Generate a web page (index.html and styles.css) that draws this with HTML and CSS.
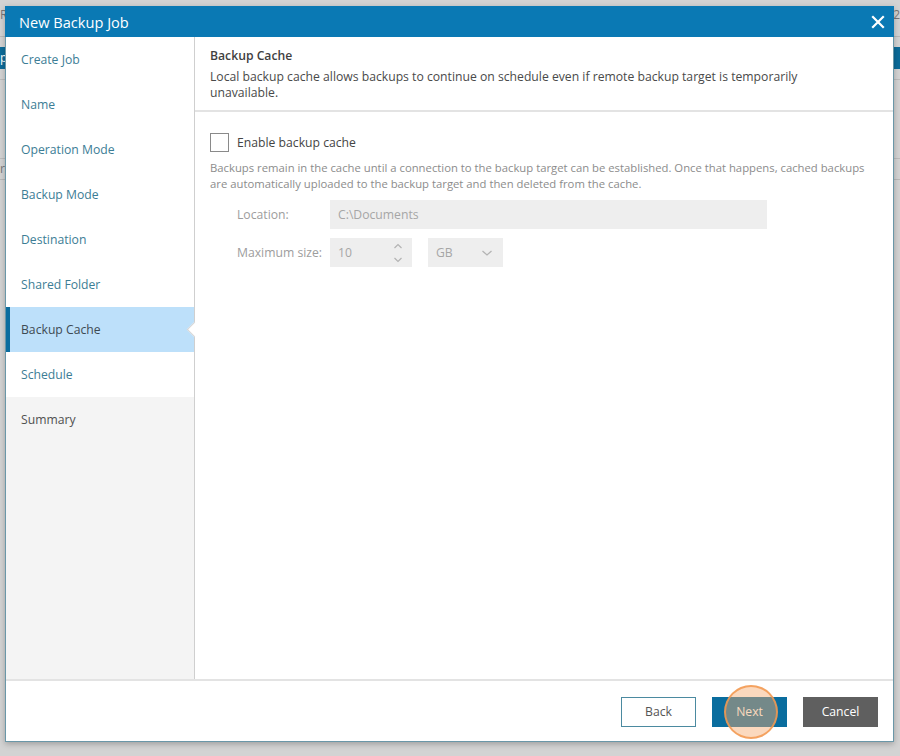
FILE: index.html
```html
<!DOCTYPE html>
<html>
<head>
<meta charset="utf-8">
<link rel="stylesheet" href="styles.css">
</head>
<body>
<div class="app">
  <div class="app-row app-top"><span>R</span><span>2</span></div>
  <div class="app-bar"><span>p</span></div>
  <div class="app-row app-sub"><span></span></div>
  <div class="app-row app-mid"><span>r</span></div>
</div>

<div class="dialog">
  <div class="dlg-title">
    <span>New Backup Job</span>
    <svg class="close" width="14" height="14" viewBox="0 0 14 14"><path d="M2 2 L12 12 M12 2 L2 12" stroke="#fff" stroke-width="2.2" stroke-linecap="square"/></svg>
  </div>
  <div class="dlg-body">
    <nav class="steps">
      <div class="step">Create Job</div>
      <div class="step">Name</div>
      <div class="step">Operation Mode</div>
      <div class="step">Backup Mode</div>
      <div class="step">Destination</div>
      <div class="step">Shared Folder</div>
      <div class="step active">Backup Cache</div>
      <div class="step">Schedule</div>
      <div class="step future">Summary</div>
    </nav>
    <main class="content">
      <div class="content-head">
        <div class="head-title">Backup Cache</div>
        <div class="head-desc">Local backup cache allows backups to continue on schedule even if remote backup target is temporarily unavailable.</div>
      </div>
      <div class="form">
        <label class="check-row"><span class="checkbox"></span><span>Enable backup cache</span></label>
        <p class="hint">Backups remain in the cache until a connection to the backup target can be established. Once that happens, cached backups are automatically uploaded to the backup target and then deleted from the cache.</p>
        <div class="field">
          <span class="field-label">Location:</span>
          <div class="input wide">C:\Documents</div>
        </div>
        <div class="field">
          <span class="field-label">Maximum size:</span>
          <div class="input num">10
            <svg class="spin" width="10" height="22" viewBox="0 0 10 22"><path d="M1.5 6 L5 2.5 L8.5 6 M1.5 16 L5 19.5 L8.5 16" fill="none" stroke="#b3b3b3" stroke-width="1.2"/></svg>
          </div>
          <div class="input sel">GB
            <svg class="chev" width="12" height="8" viewBox="0 0 12 8"><path d="M1.5 2 L6 6 L10.5 2" fill="none" stroke="#b3b3b3" stroke-width="1.3"/></svg>
          </div>
        </div>
      </div>
    </main>
  </div>
  <div class="dlg-foot">
    <button class="btn back">Back</button>
    <button class="btn next">Next</button>
    <button class="btn cancel">Cancel</button>
    <span class="tap"></span>
  </div>
</div>
</body>
</html>
```

FILE: styles.css
```css
html, body {
  margin: 0;
  padding: 0;
}
body {
  width: 900px;
  height: 756px;
  background: #d3d3d3;
  font-family: "Open Sans", "Noto Sans", sans-serif;
  position: relative;
  overflow: hidden;
}

/* faint app behind the dialog */
.app {
  display: flex;
  flex-direction: column;
  color: #777;
  font-size: 12px;
}
.app-row {
  display: flex;
  justify-content: space-between;
  border-bottom: 1px solid #b9b9b9;
}
.app-top {
  height: 36px;
  line-height: 30px;
}
.app-bar {
  margin-top: 10px;
  height: 22px;
  background: #0b6b99;
  color: #fff;
  line-height: 22px;
}
.app-sub {
  height: 10px;
  border-bottom: 1px solid #bcbcbc;
}
.app-mid {
  margin-top: 78px;
  height: 20px;
  line-height: 20px;
  border-top: 1px solid #bcbcbc;
}

/* dialog */
.dialog {
  position: absolute;
  left: 5px;
  top: 6px;
  width: 887px;
  height: 734px;
  background: #fff;
  border: 1px solid #6a97a8;
  box-shadow: 0 2px 6px rgba(0,0,0,0.25);
  display: flex;
  flex-direction: column;
}
.dlg-title {
  height: 31px;
  flex: none;
  background: #0a79b4;
  color: #fff;
  font-size: 14.6px;
  display: flex;
  align-items: center;
  justify-content: space-between;
  padding: 0 8px 0 14px;
  margin: -1px -1px 0 -1px;
}
.close {
  display: block;
  margin-right: 1px;
}
.dlg-body {
  flex: 1;
  display: flex;
  min-height: 0;
}
.steps {
  width: 188px;
  flex: none;
  background: #f4f4f4;
  border-right: 1px solid #cfcfcf;
  display: flex;
  flex-direction: column;
}
.step {
  height: 45px;
  line-height: 45px;
  padding-left: 15px;
  font-size: 12.2px;
  color: #3c7d95;
  background: #fff;
  position: relative;
}
.step.active {
  background: #bde0fa;
  color: #3d4a52;
  border-left: 4px solid #0b6d9f;
  padding-left: 11px;
}
.step.active::after {
  content: "";
  position: absolute;
  right: -6px;
  top: 17px;
  width: 10px;
  height: 10px;
  background: #fff;
  transform: rotate(45deg);
  border-left: 1px solid #d6d6d6;
  border-bottom: 1px solid #d6d6d6;
}
.step.future {
  background: #f4f4f4;
  color: #505050;
}
.content {
  flex: 1;
  display: flex;
  flex-direction: column;
}
.content-head {
  padding: 10px 20px 9px 15px;
  border-bottom: 2px solid #e3e3e3;
}
.head-title {
  font-size: 12.2px;
  font-weight: 600;
  color: #3f3f3f;
  line-height: 18px;
  margin-bottom: 4px;
}
.head-desc {
  font-size: 12.2px;
  color: #4a4a4a;
  line-height: 16px;
  max-width: 615px;
}
.form {
  padding: 21px 20px 0 15px;
}
.check-row {
  display: flex;
  align-items: center;
  gap: 8px;
  font-size: 12.2px;
  color: #454545;
}
.checkbox {
  width: 17px;
  height: 17px;
  border: 1px solid #8a8a8a;
  background: #fff;
  display: block;
}
.hint {
  margin: 8px 0 8px 0;
  font-size: 11.3px;
  line-height: 16px;
  color: #8c8c8c;
}
.field {
  display: flex;
  align-items: center;
  margin-bottom: 9px;
  padding-left: 27px;
}
.field-label {
  width: 93px;
  font-size: 12.2px;
  color: #9d9d9d;
}
.input {
  height: 29px;
  background: #eeeeee;
  font-size: 12.2px;
  color: #a6a6a6;
  display: flex;
  align-items: center;
  padding-left: 8px;
  box-sizing: border-box;
  position: relative;
}
.input.wide {
  width: 437px;
}
.input.num {
  width: 82px;
  justify-content: space-between;
  padding-right: 9px;
}
.input.sel {
  width: 75px;
  margin-left: 16px;
  justify-content: space-between;
  padding-right: 10px;
}
.spin, .chev {
  display: block;
}
.dlg-foot {
  height: 60px;
  flex: none;
  border-top: 2px solid #e3e3e3;
  display: flex;
  justify-content: flex-end;
  align-items: center;
  gap: 16px;
  padding: 0 15px 0 0;
  position: relative;
}
.btn {
  width: 75px;
  height: 30px;
  font-family: "Open Sans", "Noto Sans", sans-serif;
  font-size: 12.2px;
  border: 1px solid transparent;
  padding: 0;
  margin-top: 1px;
}
.btn.back {
  background: #fff;
  border-color: #4b8aa0;
  color: #555;
}
.btn.next {
  background: #0a6d9e;
  color: #fff;
}
.btn.cancel {
  background: #5f5f5f;
  color: #fff;
}
.tap {
  position: absolute;
  left: 718px;
  top: 4px;
  width: 50px;
  height: 50px;
  border-radius: 50%;
  border: 2px solid rgba(243,153,80,0.85);
  background: rgba(246,170,110,0.45);
  pointer-events: none;
}
```
